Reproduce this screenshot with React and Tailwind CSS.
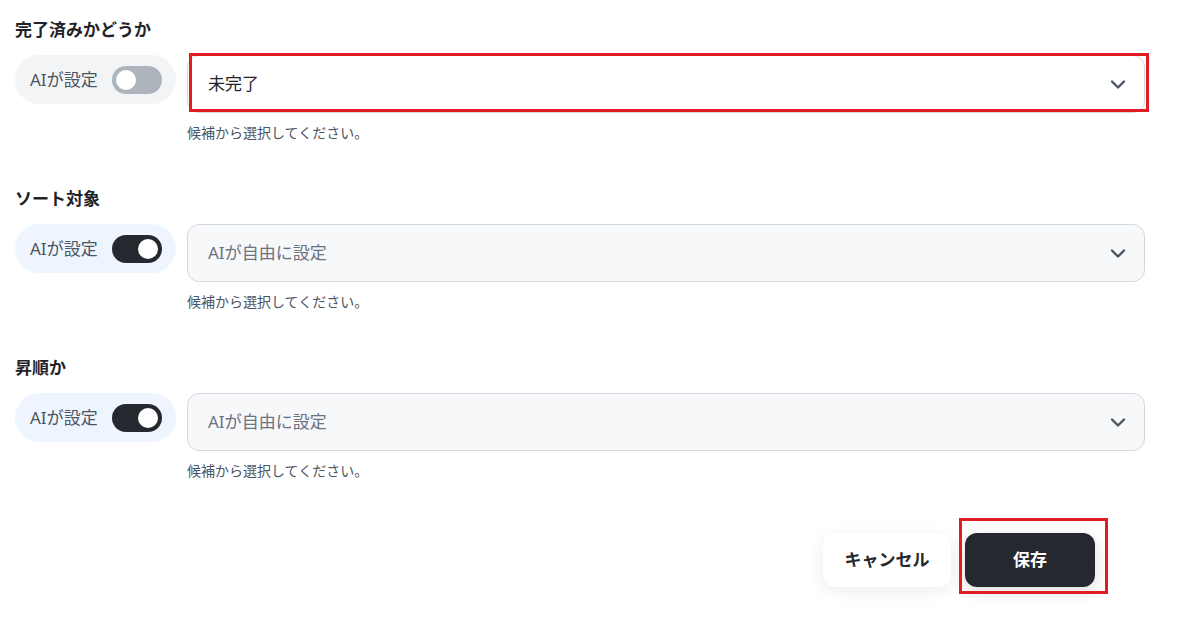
import React from 'react';

const Chevron = () => (
    <svg width="16" height="16" viewBox="0 0 16 16" fill="none" stroke="#4b5563" strokeWidth="2.4" strokeLinecap="round" strokeLinejoin="round">
        <path d="M2 5.5l6 6 6-6" />
    </svg>
);

const Toggle = ({ on }) => (
    <div className={`w-[50px] h-[28px] rounded-full flex items-center px-[4px] ${on ? 'bg-[#25282e] justify-end' : 'bg-[#adb4bc] justify-start'}`}>
        <div className="w-[20px] h-[20px] rounded-full bg-white" />
    </div>
);

const Field = ({ label, on, value, highlight }) => (
    <div className="flex flex-col">
        <div className="text-[17px] font-bold text-[#1f2329] leading-6">{label}</div>
        <div className="flex items-start gap-[11px] mt-[13px]">
            <div className={`w-[161px] h-[49px] rounded-full flex items-center justify-between pl-[15px] pr-[14px] ${on ? 'bg-[#eef5fe]' : 'bg-[#f3f4f6]'}`}>
                <span className="text-[17px] text-[#4b5563]">AIが設定</span>
                <Toggle on={on} />
            </div>
            <div className="flex-1 flex flex-col relative">
                <div className={`h-[58px] rounded-xl border border-[#d4d8de] flex items-center justify-between pl-[20px] pr-[18px] ${on ? 'bg-[#f7f8fa]' : 'bg-white'}`}>
                    <span className={`text-[17px] ${on ? 'text-[#6b7280]' : 'text-[#1f2329]'}`}>{value}</span>
                    <Chevron />
                </div>
                {highlight && (
                    <div className="absolute left-[2px] top-[-2px] w-[960px] h-[59px] border-[3px] border-[#e31b23]" />
                )}
                <div className="text-[14px] leading-5 text-[#4b5563] mt-[10px]">候補から選択してください。</div>
            </div>
        </div>
    </div>
);

const App = () => {
    return (
        <div className="w-[1181px] h-[630px] bg-white overflow-hidden pl-[15px] pt-[18px]" style={{ fontFamily: '"Noto Sans", "Noto Sans CJK JP", sans-serif' }}>
            <div className="w-[1130px] flex flex-col gap-[44px]">
                <Field label="完了済みかどうか" on={false} value="未完了" highlight />
                <Field label="ソート対象" on value="AIが自由に設定" />
                <Field label="昇順か" on value="AIが自由に設定" />
            </div>
            <div className="w-[1080px] flex justify-end gap-[14px] mt-[52px]">
                <button className="w-[128px] h-[54px] rounded-xl bg-white shadow-[0_4px_16px_rgba(0,0,0,0.08)] text-[17px] font-bold text-[#25282e]">キャンセル</button>
                <div className="relative">
                    <button className="w-[130px] h-[54px] rounded-xl bg-[#25282e] shadow-[0_4px_16px_rgba(0,0,0,0.15)] text-[17px] font-bold text-white">保存</button>
                    <div className="absolute left-[-6px] top-[-15px] w-[149px] h-[76px] border-[3px] border-[#e31b23]" />
                </div>
            </div>
        </div>
    );
};

export default App;
